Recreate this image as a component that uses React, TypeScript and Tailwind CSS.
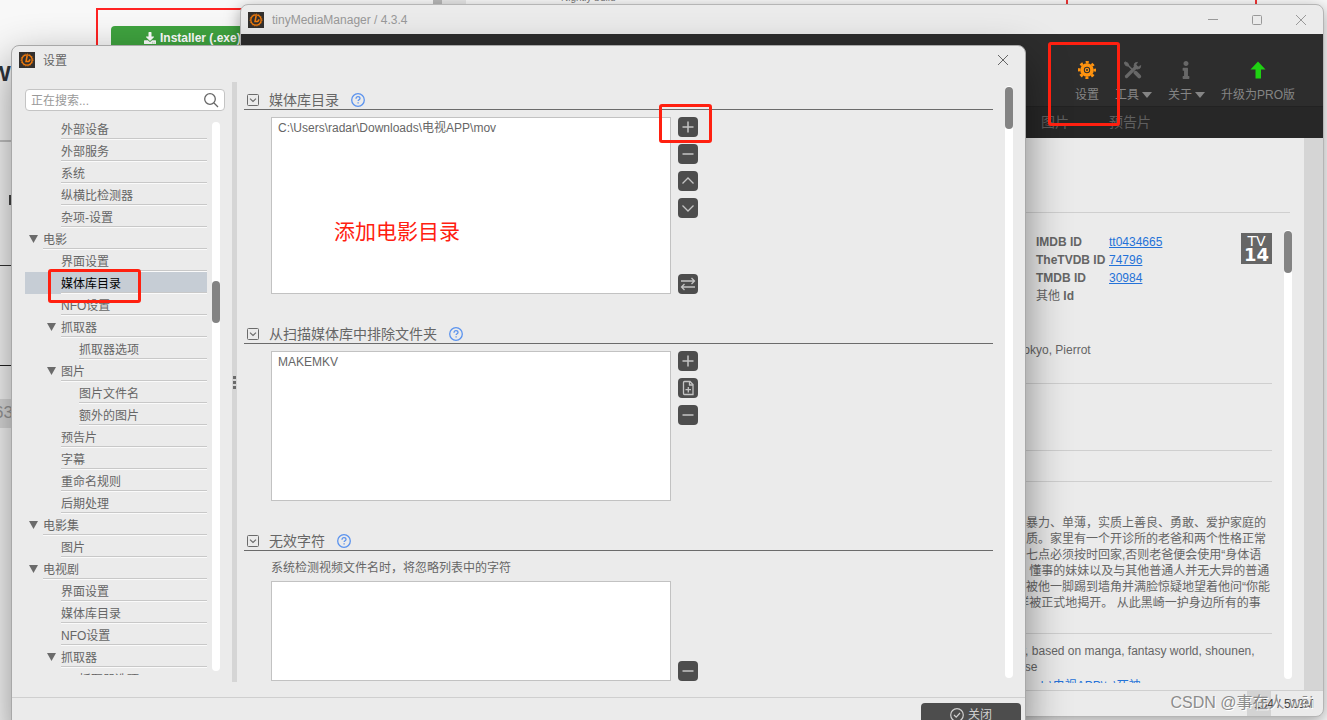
import React from 'react';
import { FaInfo, FaDownload } from 'react-icons/fa';

type Node = { label: string; level: number; open?: boolean; active?: boolean };

const tree: Node[] = [
  { label: '外部设备', level: 1 },
  { label: '外部服务', level: 1 },
  { label: '系统', level: 1 },
  { label: '纵横比检测器', level: 1 },
  { label: '杂项-设置', level: 1 },
  { label: '电影', level: 0, open: true },
  { label: '界面设置', level: 1 },
  { label: '媒体库目录', level: 1, active: true },
  { label: 'NFO设置', level: 1 },
  { label: '抓取器', level: 1, open: true },
  { label: '抓取器选项', level: 2 },
  { label: '图片', level: 1, open: true },
  { label: '图片文件名', level: 2 },
  { label: '额外的图片', level: 2 },
  { label: '预告片', level: 1 },
  { label: '字幕', level: 1 },
  { label: '重命名规则', level: 1 },
  { label: '后期处理', level: 1 },
  { label: '电影集', level: 0, open: true },
  { label: '图片', level: 1 },
  { label: '电视剧', level: 0, open: true },
  { label: '界面设置', level: 1 },
  { label: '媒体库目录', level: 1 },
  { label: 'NFO设置', level: 1 },
  { label: '抓取器', level: 1, open: true },
  { label: '抓取器选项', level: 2 },
];

const indent = ['pl-0', 'pl-[18px]', 'pl-[36px]'];

const plot = [
  '好暴力、单薄，实质上善良、勇敢、爱护家庭的',
  '气质。家里有一个开诊所的老爸和两个性格正常',
  '上七点必须按时回家,否则老爸便会使用“身体语',
  '， 懂事的妹妹以及与其他普通人并无大异的普通',
  '在被他一脚踢到墙角并满脸惊疑地望着他问“你能',
  ' 样被正式地揭开。 从此黑崎一护身边所有的事',
];

const ids = [
  ['IMDB ID', 'tt0434665'],
  ['TheTVDB ID', '74796'],
  ['TMDB ID', '30984'],
];

function Logo() {
  return (
    <svg viewBox="0 0 16 16" className="w-4 h-4 shrink-0">
      <rect width="16" height="16" fill="#33302e" />
      <circle cx="8" cy="8" r="5.2" fill="none" stroke="#f57c0b" strokeWidth="1.3" />
      <circle cx="8" cy="8" r="6" fill="none" stroke="#f57c0b" strokeWidth="0.8" strokeDasharray="1.2 1.3" />
      <path d="M8.200 3.500 7 9.600h1.600c1.200 0 2.200-1 2.200-2.400" fill="none" stroke="#f57c0b" strokeWidth="1.500" />
    </svg>
  );
}

const glyphs: Record<string, React.ReactNode> = {
  plus: <path d="M10 4.500v11M4.500 10h11" strokeWidth="1.500" />,
  minus: <path d="M4.500 10h11" strokeWidth="1.500" />,
  up: <path d="M4.500 12.500 10 7l5.500 5.500" />,
  down: <path d="M4.500 7.500 10 13l5.500-5.500" />,
  swap: <path d="M3 7h13.500M13.500 4 16.500 7l-3 3M17 13H3.500M6.500 10l-3 3 3 3" />,
  file: (
    <>
      <path d="M6.500 3.500h5.500l3 3v10H6.500a1 1 0 0 1-1-1v-11a1 1 0 0 1 1-1z" />
      <path d="M11.500 3.500v3.500h3.500M10.300 9v5.500M7.500 11.700h5.500" />
    </>
  ),
};

function IconButton({ icon, label }: { icon: string; label: string }) {
  return (
    <button aria-label={label} className="block w-5 h-5 rounded bg-[#4d4d4d]">
      <svg viewBox="0 0 20 20" className="w-5 h-5" fill="none" stroke="#c4c4c4" strokeWidth="1.300">
        {glyphs[icon]}
      </svg>
    </button>
  );
}

function SectionTitle({ children }: { children: React.ReactNode }) {
  return (
    <div className="h-5 flex items-center border-b border-[#6b6b6b] pl-[3px]">
      <svg viewBox="0 0 12 12" className="w-3 h-3" fill="none" stroke="#6b6b6b">
        <rect x="0.5" y="0.5" width="11" height="11" rx="1" />
        <path d="M3 4.600 6 7.400l3-2.800" strokeWidth="1.200" />
      </svg>
      <h2 className="ml-[10px] text-[14px] leading-5">{children}</h2>
      <button aria-label="帮助" className="ml-3">
        <svg viewBox="0 0 14 14" className="w-[14px] h-[14px]" fill="none" stroke="#5b93ee" strokeWidth="1.300">
          <circle cx="7" cy="7" r="6.300" />
          <path d="M5 5.700c0-1.300.8-2.100 2-2.100s2 .7 2 1.800c0 1.300-1.900 1.500-1.900 2.700" />
          <path d="M7.100 9.300v1.300" />
        </svg>
      </button>
    </div>
  );
}

function Close() {
  return (
    <svg viewBox="0 0 12 12" className="w-3 h-3" fill="none" stroke="currentColor">
      <path d="M1 1l10 10M11 1 1 11" />
    </svg>
  );
}

function Caret() {
  return (
    <svg viewBox="0 0 10 6" className="w-[10px] h-[6px] ml-[3px]" fill="currentColor">
      <path d="M0 0h10L5 6z" />
    </svg>
  );
}

function GearIcon() {
  return (
    <svg viewBox="0 0 18 18" className="w-[18px] h-[18px]" fill="none" stroke="#ff930f">
      <circle cx="9" cy="9" r="7.800" strokeWidth="2.400" strokeDasharray="3.100 3.026" strokeDashoffset="1.550" />
      <circle cx="9" cy="9" r="5" strokeWidth="3.600" />
      <circle cx="9" cy="9" r="1.600" strokeWidth="1.200" />
    </svg>
  );
}

function WrenchIcon() {
  return (
    <svg viewBox="0 0 18 18" className="w-[18px] h-[18px]" fill="none" stroke="#686868">
      <path d="M12 6 2.500 15.500" strokeWidth="3.200" strokeLinecap="round" />
      <path d="M13.500 1.300a3.400 3.400 0 1 0 3.300 3.300L14.200 6l-2.300-2.200z" fill="#686868" strokeWidth="0.800" />
      <path d="M1 .8 3.800 2l.8 2-1.200 1.200-2-.9L.3 2z" fill="#686868" strokeWidth="0.800" />
      <path d="M3.500 3.800 9 9.300" strokeWidth="1.600" />
      <path d="M11.500 11.700l3.700 3.700" strokeWidth="3.800" strokeLinecap="round" />
    </svg>
  );
}

function UpgradeIcon() {
  return (
    <svg viewBox="0 0 18 18" className="w-[18px] h-[18px]" fill="#1fd112">
      <path d="M9 .5l7.500 8H12V17.500H6.500v-9h-5z" />
    </svg>
  );
}

function ToolButton({ icon, children }: { icon: React.ReactNode; children: React.ReactNode }) {
  return (
    <button className="flex flex-col items-center gap-2">
      {icon}
      <span className="flex items-center leading-4">{children}</span>
    </button>
  );
}

// الصفحة الخلفية خلف النوافذ
function Desktop() {
  return (
    <div className="absolute inset-0 bg-[#f8f8f8]">
      <div className="absolute left-[96px] top-2 w-[400px] h-[80px] border-2 border-[#f22]" />
      <button className="absolute left-[111px] top-[26px] w-[210px] h-6 rounded-sm bg-[#3fa33f] text-white font-bold text-[12px] flex items-center gap-1 pl-[33px]">
        <FaDownload className="w-3 h-3" />
        Installer (.exe)
      </button>
      <div className="absolute left-[433px] top-0 w-[9px] h-1 bg-[#b8b8b8]" />
      <div className="absolute left-[442px] top-0 w-6 h-1 bg-[#e6e6e6]" />
      <div className="absolute left-[561px] -top-2 text-[10px] leading-3 text-[#777]">Nightly build</div>
      <div className="absolute right-[259px] top-0 w-[2px] h-1 bg-[#e33]" />
      <div className="absolute right-[70px] top-0 w-[2px] h-1 bg-[#e33]" />
      <div className="absolute left-[-10px] top-[60px] text-[22px] leading-7 font-bold text-[#2f343a]">W</div>
      <div className="absolute left-0 top-[140px] w-4 h-[2px] bg-[#c4c4c4]" />
      <div className="absolute left-[9px] top-[195px] w-1 h-[10px] bg-[#444]" />
      <div className="absolute left-0 top-[265px] w-4 h-px bg-[#333]" />
      <div className="absolute left-0 top-[365px] w-4 h-px bg-[#222]" />
      <div className="absolute left-0 top-[399px] w-4 h-[29px] bg-[#ddd]" />
      <div className="absolute left-[-6px] top-[401px] text-[17px] leading-6 text-[#999]">63</div>
    </div>
  );
}

function MainWindow() {
  return (
    <div className="absolute left-[240px] right-[3px] top-1 bottom-[3px] flex flex-col rounded-lg overflow-hidden border border-[#b5b5b5] bg-[#ebebeb] shadow-[0_4px_16px_rgba(0,0,0,0.35)]">
      <header className="h-[29px] shrink-0 flex items-center pl-[7px] text-[#999]">
        <Logo />
        <span className="ml-2">tinyMediaManager / 4.3.4</span>
        <div className="ml-auto flex h-full">
          <button aria-label="最小化" className="w-11 flex items-center justify-center">
            <svg viewBox="0 0 12 12" className="w-3 h-3" stroke="currentColor"><path d="M1 5.500h10" /></svg>
          </button>
          <button aria-label="最大化" className="w-11 flex items-center justify-center">
            <svg viewBox="0 0 12 12" className="w-3 h-3" fill="none" stroke="currentColor"><rect x="1.500" y="1.500" width="9" height="9" rx="1" /></svg>
          </button>
          <button aria-label="关闭窗口" className="w-11 flex items-center justify-center"><Close /></button>
        </div>
      </header>
      <div className="h-[72px] shrink-0 bg-[#2d2d2d] text-[#858585] flex justify-end items-start gap-4 pt-[27px] pr-7">
        <ToolButton icon={<GearIcon />}>设置</ToolButton>
        <ToolButton icon={<WrenchIcon />}>工具<Caret /></ToolButton>
        <ToolButton icon={<FaInfo className="w-[18px] h-[18px] text-[#686868]" />}>关于<Caret /></ToolButton>
        <ToolButton icon={<UpgradeIcon />}>升级为PRO版</ToolButton>
      </div>
      <nav className="h-8 shrink-0 bg-[#272727] border-t border-[#222] text-[#5f5f5f] text-[14px] flex justify-end items-center gap-10 pr-[172px]">
        <button>图片</button>
        <button>预告片</button>
      </nav>
      <main className="flex-1 min-h-0 flex">
        <div className="flex-1 flex flex-col">
          <div className="h-[75px] shrink-0 mr-[14px] border-b border-[#cfcfcf]" />
          <div className="flex-1 min-h-0 mt-[17px] mb-[7px] mr-3 flex justify-end overflow-hidden">
            <div className="w-[258px]">
              <div className="h-[154px] flex flex-col border-b border-[#cfcfcf] pt-[3px]">
                <div className="flex items-start pl-[22px]">
                  <table className="leading-[18px] text-left">
                    <tbody>
                      {ids.map(([name, id]) => (
                        <tr key={id}>
                          <th className="w-[73px] whitespace-nowrap p-0">{name}</th>
                          <td className="p-0"><a href="#" className="text-[#2472d8] underline">{id}</a></td>
                        </tr>
                      ))}
                      <tr><th className="p-0"><span className="font-normal">其他</span> Id</th></tr>
                    </tbody>
                  </table>
                  <div className="ml-auto w-[31px] h-[31px] pt-[2px] bg-[#666] text-white text-center font-['DejaVu_Sans']">
                    <div className="text-[14px] leading-3">TV</div>
                    <div className="text-[18px] leading-4 font-bold">14</div>
                  </div>
                </div>
                <p className="mt-9 leading-[18px]">{'\u00a0'}Tokyo, Pierrot</p>
              </div>
              <div className="h-[67px] border-b border-[#cfcfcf]" />
              <div className="h-[31px] border-b border-[#cfcfcf]" />
              <div className="h-[152px] pt-[33px] border-b border-[#cfcfcf] leading-4 whitespace-pre">
                {plot.map((line) => <p key={line}>{line}</p>)}
              </div>
              <div className="pt-[9px] leading-4 whitespace-nowrap">
                <p>sy, based on manga, fantasy world, shounen,</p>
                <p>orse</p>
                <a href="#" className="block mt-[3px] text-[#2472d8] underline">nloads\电视APP\tv\死神</a>
              </div>
            </div>
            <div className="ml-3 mb-1 w-2 rounded-full bg-white pt-px">
              <div className="h-[42px] rounded-full bg-[#838383]" />
            </div>
          </div>
        </div>
        <div className="w-[19px] bg-[#d5d5d5]" />
      </main>
      <footer className="h-[26px] shrink-0 border-t border-[#cfcfcf] flex justify-end text-[#444]">
        <div className="h-full w-[76px] bg-[linear-gradient(90deg,#d3d3d3_24px,transparent_24px)] pr-[9px] flex items-center justify-end">
          154 / 512M
        </div>
      </footer>
    </div>
  );
}

function SettingsDialog() {
  return (
    <div className="absolute left-[11px] top-[45px] right-[301px] -bottom-4 flex flex-col rounded-lg border border-[#a8a8a8] bg-[#ebebeb] shadow-[0_16px_44px_rgba(0,0,0,0.45)]">
      <header className="h-7 mb-2 shrink-0 flex items-center pl-[7px] pr-4">
        <Logo />
        <h1 className="ml-2 pt-[2px]">设置</h1>
        <button aria-label="关闭对话框" className="ml-auto"><Close /></button>
      </header>
      <div className="flex-1 min-h-0 flex mb-[15px]">
        <aside className="w-[220px] shrink-0 pl-[13px] pt-[7px] pb-[7px] flex flex-col">
          <label className="w-[200px] h-[22px] shrink-0 flex items-center rounded border border-[#c4c4c4] bg-white px-[5px]">
            <input aria-label="搜索" placeholder="正在搜索..." className="flex-1 min-w-0 pt-[2px] outline-none placeholder:text-[#999]" />
            <svg viewBox="0 0 16 16" className="w-4 h-4" fill="none" stroke="#666" strokeWidth="1.300">
              <circle cx="7" cy="7" r="5.300" />
              <path d="M11 11l4 4" />
            </svg>
          </label>
          <div className="flex-1 min-h-0 mt-[7px] flex">
            <ul className="w-[182px] overflow-hidden">
              {tree.map((n, i) => (
                <li key={i} className={`h-[22px] flex ${indent[n.level]} ${n.active ? 'bg-[#c6cdd5] text-black' : ''}`}>
                  <span className="w-[18px] shrink-0 pl-1 pt-[7px]">
                    {n.open && (
                      <svg viewBox="0 0 9 8" className="w-[9px] h-2" fill="#6b6b6b"><path d="M0 0h9L4.500 8z" /></svg>
                    )}
                  </span>
                  <span className="flex-1 h-[21px] border-b border-[#c8c8c8] shadow-[0_1px_0_#fafafa] leading-[25px] whitespace-nowrap">{n.label}</span>
                </li>
              ))}
            </ul>
            <div className="ml-[5px] my-1 w-2 rounded-full bg-white pt-[159px]">
              <div className="h-[42px] rounded-full bg-[#838383]" />
            </div>
          </div>
        </aside>
        <div className="w-[5px] shrink-0 bg-[#d5d5d5] flex flex-col items-center justify-center gap-[2px]">
          <i className="w-[3px] h-[3px] bg-[#6b6b6b]" />
          <i className="w-[3px] h-[3px] bg-[#6b6b6b]" />
          <i className="w-[3px] h-[3px] bg-[#6b6b6b]" />
        </div>
        <div className="flex-1 pl-[7px] pt-2 overflow-hidden">
          <section className="mb-[30px]">
            <SectionTitle>媒体库目录</SectionTitle>
            <div className="flex pl-[27px] pt-[7px]">
              <ul className="w-[400px] h-[177px] border border-[#c2c2c2] bg-white px-[6px] py-[2px] leading-4">
                <li>C:\Users\radar\Downloads\电视APP\mov</li>
              </ul>
              <div className="ml-[7px] flex flex-col gap-[7px]">
                <IconButton icon="plus" label="添加" />
                <IconButton icon="minus" label="删除" />
                <IconButton icon="up" label="上移" />
                <IconButton icon="down" label="下移" />
                <div className="mt-auto"><IconButton icon="swap" label="替换" /></div>
              </div>
            </div>
          </section>
          <section className="mb-[30px]">
            <SectionTitle>从扫描媒体库中排除文件夹</SectionTitle>
            <div className="flex pl-[27px] pt-[7px]">
              <ul className="w-[400px] h-[150px] border border-[#c2c2c2] bg-white px-[6px] py-[2px] leading-4">
                <li>MAKEMKV</li>
              </ul>
              <div className="ml-[7px] flex flex-col gap-[7px]">
                <IconButton icon="plus" label="添加文件夹" />
                <IconButton icon="file" label="手动添加" />
                <IconButton icon="minus" label="删除文件夹" />
              </div>
            </div>
          </section>
          <section>
            <SectionTitle>无效字符</SectionTitle>
            <p className="pl-[27px] pt-[9px] pb-[5px] leading-4">系统检测视频文件名时，将忽略列表中的字符</p>
            <div className="flex items-end pl-[27px]">
              <ul className="w-[400px] h-[100px] border border-[#c2c2c2] bg-white" />
              <div className="ml-[7px]"><IconButton icon="minus" label="删除字符" /></div>
            </div>
          </section>
        </div>
        <div className="mx-3 my-1 w-2 shrink-0 rounded-full bg-white pt-px">
          <div className="h-[42px] rounded-full bg-[#838383]" />
        </div>
      </div>
      <footer className="h-[38px] shrink-0 border-t border-[#cfcfcf] flex justify-end items-start pt-[5px] pr-1">
        <button className="w-[100px] h-6 rounded bg-[#4d4d4d] text-[#d0d0d0] flex items-center justify-center gap-1">
          <svg viewBox="0 0 14 14" className="w-[14px] h-[14px]" fill="none" stroke="currentColor" strokeWidth="1.200">
            <circle cx="7" cy="7" r="6.300" />
            <path d="M4 7l2.200 2.200L10 5" />
          </svg>
          关闭
        </button>
      </footer>
    </div>
  );
}

export default function App() {
  return (
    <div className="relative h-screen overflow-hidden text-[12px] text-[#666] font-['Liberation_Sans','Noto_Sans_CJK_SC',sans-serif]">
      <Desktop />
      <MainWindow />
      <SettingsDialog />
      {/* علامات حمراء فوق النوافذ */}
      <div className="absolute left-[659px] top-[104px] w-[53px] h-[39px] rounded-[3px] border-3 border-[#ff2010]" />
      <div className="absolute left-[48px] top-[269px] w-[93px] h-[34px] rounded-[3px] border-3 border-[#ff2010]" />
      <div className="absolute right-[207px] top-[42px] w-[72px] h-[84px] rounded-[3px] border-3 border-[#ff2010]" />
      <div className="absolute left-[334px] top-[218px] text-[21px] leading-7 text-[#ff2010]">添加电影目录</div>
      <div className="absolute right-[14px] bottom-[5px] text-[16px] leading-6 text-[#8c8c8c] [text-shadow:1px_1px_0_#fff]">CSDN @事在人 wēi</div>
    </div>
  );
}
